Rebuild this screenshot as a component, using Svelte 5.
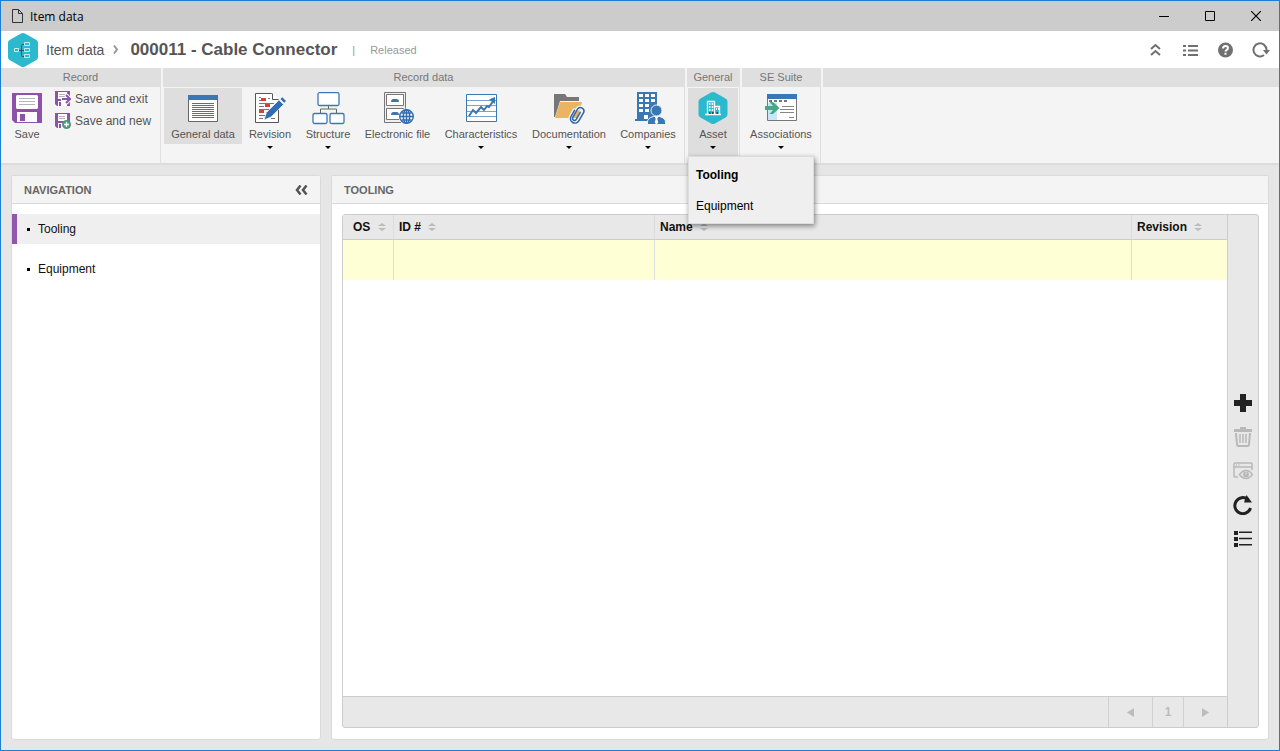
<script lang="ts">
  type RibbonItem = {
    label: string;
    icon: string;
    width: number;
    active?: boolean;
    dropdown?: boolean;
  };

  const recordItems: RibbonItem[] = [
    { label: "General data", icon: "general", width: 78, active: true },
    { label: "Revision", icon: "revision", width: 56, dropdown: true },
    { label: "Structure", icon: "structure", width: 60, dropdown: true },
    { label: "Electronic file", icon: "file", width: 79 },
    { label: "Characteristics", icon: "chart", width: 88, dropdown: true },
    { label: "Documentation", icon: "folder", width: 88, dropdown: true },
    { label: "Companies", icon: "companies", width: 70, dropdown: true },
  ];

  const sections = ["Tooling", "Equipment"];
  const columns = [
    { key: "os", label: "OS" },
    { key: "id", label: "ID #" },
    { key: "name", label: "Name" },
    { key: "revision", label: "Revision" },
  ];

  let selected = $state("Tooling");
  let menuOpen = $state(true);

  function select(section: string) {
    selected = section;
    menuOpen = false;
  }
</script>

{#snippet floppy()}
  <path fill="#8e52ab" d="M0 0h30v30H3l-3-3z" />
  <path fill="#fff" d="M5 2h20l1 1v12l-1 1H5l-1-1V3z" />
  <path fill="none" stroke="#b5b5b5" d="M7 5.500h16M7 8.500h16M7 11.500h16" />
  <path fill="#fff" d="M5 19h20v10H5z" />
  <path fill="#8e52ab" d="M8 21h5v7H8z" />
{/snippet}

{#snippet smallFloppy()}
  <path fill="#8e52ab" d="M0 0h15v15H2l-2-2z" />
  <path fill="#fff" d="M3 1h9v7H3zM3 10h9v5H3z" />
  <path fill="none" stroke="#b5b5b5" d="M4 3.500h6M4 5.500h6" />
  <path fill="#8e52ab" d="M4 11h2v4H4z" />
{/snippet}

{#snippet ribbonIcon(name: string)}
  <svg class="ribbon-icon" viewBox="0 0 32 32" aria-hidden="true">
    {#if name === "general"}
      <path fill="#fff" stroke="#666" d="M1.500 3.500h29v26h-29z" />
      <path fill="#3b77b5" d="M1 3h30v5H1z" />
      <path
        fill="none"
        stroke="#3b77b5"
        d="M5 11.500h22M5 13.500h22M5 15.500h22M5 17.500h22M5 19.500h22M5 21.500h22M5 23.500h22M5 25.500h22"
      />
    {:else if name === "revision"}
      <path fill="#fff" stroke="#555" d="M1.500 1.500h16l7 7v22h-23z" />
      <path fill="#fff" stroke="#555" d="M18.500 1.500v6h6" />
      <path
        fill="none"
        stroke="#777"
        d="M5 5.500h2M5 8.500h2M14 6.500h2M5 11.500h15M5 14.500h5M5 17.500h13M12 20.500h4M5 23.500h9M5 26.500h4M17 26.500h4"
      />
      <path fill="#cc4433" d="M7 6h5v3H7zM11 12h5v3h-5zM5 18h5v3H5z" />
      <path
        fill="#2f6db5"
        stroke="#f4f4f4"
        stroke-width=".7"
        d="M10 28l2.500-7.500L25 8l4.500 4.500L17 25z"
      />
      <path fill="#2f6db5" d="M26.500 7l1.800-1.800 3.700 3.700-1.800 1.800z" />
    {:else if name === "structure"}
      <path fill="none" stroke="#666" d="M16.500 14v3M8.500 21v-4h16v4" />
      <g fill="#fff" stroke="#3b77b5" stroke-width="1.300">
        <rect x="6" y=".7" width="21" height="12.800" rx="1.500" />
        <rect x="1" y="21.500" width="14" height="10" rx="1.500" />
        <rect x="18" y="21.500" width="14" height="10" rx="1.500" />
      </g>
    {:else if name === "file"}
      <path fill="#eee" stroke="#777" d="M2.500.500h21v30h-21z" />
      <path
        fill="#fff"
        stroke="#777"
        d="M4.500 2.500h17v11h-17zM4.500 16.500h17v11h-17z"
      />
      <path
        fill="#3b77b5"
        d="M9 10q0-3 2.500-3h3Q17 7 17 10zM9 23q0-3 2.500-3h3q2.500 0 2.500 3z"
      />
      <circle cx="24.500" cy="24.500" r="8" fill="#f4f4f4" />
      <g fill="none" stroke="#2f6db5" stroke-width="1.400">
        <circle cx="24.500" cy="24.500" r="6.800" />
        <ellipse cx="24.500" cy="24.500" rx="3.200" ry="6.800" />
        <path d="M24.500 18v13M18 24.500h13M19.500 21h10M19.500 28h10" />
      </g>
    {:else if name === "chart"}
      <path fill="#fff" stroke="#3b77b5" d="M1.500 2.500h30v27h-30z" />
      <path
        fill="none"
        stroke="#78a3d0"
        d="M2 8.500h29M2 13.500h29M2 19.500h29M2 24.500h29"
      />
      <path
        fill="none"
        stroke="#3b77b5"
        stroke-width="2"
        d="M4 24l4-6 3 3 5-6 3 3 3-4 2 1 5-7"
      />
      <path fill="#3b77b5" d="M24 7.500l6-2.500v7z" />
    {:else if name === "folder"}
      <path fill="#777" d="M1 2h11l2 3h12v4H7L2 25H1z" />
      <path fill="#e9b565" d="M7 10h22l-4 16H2z" />
      <g
        fill="none"
        stroke-linecap="round"
        transform="translate(24 22) rotate(30)"
      >
        <path
          stroke="#f5f5f5"
          stroke-width="4"
          d="M-4-2V5a4.300 4.300 0 0 0 9 0V-5a3.600 3.600 0 0 0-7 0"
        />
        <path
          stroke="#2d63a8"
          stroke-width="1.500"
          d="M-4-2V5a4.300 4.300 0 0 0 9 0V-5a3.600 3.600 0 0 0-7 0V5a2 2 0 0 0 4 0V-3"
        />
      </g>
    {:else if name === "companies"}
      <path fill="#3b77b5" d="M5 0h20v29H3v-2h2z" />
      <path
        fill="#fff"
        d="M7 2h4v3H7zM13 2h4v3h-4zM19 2h4v3h-4zM7 7h4v3H7zM13 7h4v3h-4zM19 7h4v3h-4zM7 12h4v3H7zM13 12h4v3h-4zM7 17h4v3H7zM13 17h4v3h-4zM12 23h4v4h-4z"
      />
      <g fill="#3b77b5" stroke="#f5f5f5">
        <path d="M15.500 32.500V30q0-4 6-5.500h6q6 1.500 6 5.500v2.500z" />
        <circle cx="24.500" cy="18.500" r="5.500" />
      </g>
      <path fill="#fff" d="M23 25h3l-.7 2 1 3.500-1.800 2-1.800-2 1-3.500z" />
    {:else if name === "asset"}
      <path
        fill="#2cb9ce"
        d="M14 .6q2-1.200 4 0l10.500 6q2 1 2 3v12.800q0 2-2 3L18 31.400q-2 1.200-4 0l-10.500-6q-2-1-2-3V9.600q0-2 2-3z"
      />
      <path
        fill="none"
        stroke="#fff"
        stroke-width="1.300"
        d="M8 22.500h16M10.500 22V9.500h7V22M17.500 14.500h5V22"
      />
      <path
        fill="#fff"
        d="M12 11h1.500v2H12zM14.700 11h1.500v2h-1.500zM12 14h1.500v2H12zM14.700 14h1.500v2h-1.500zM12 17h1.500v2H12zM14.700 17h1.500v2h-1.500zM19 16h1v2h-1zM21 16h1v2h-1z"
      />
      <path fill="#164e59" d="M12 20h1.500v2H12zM15 20h1.500v2H15zM19.500 20H21v2h-1.500z" />
    {:else if name === "associations"}
      <path fill="#fff" stroke="#777" d="M2.500 2.500h29v26h-29z" />
      <path fill="#3b77b5" d="M2 2h30v5H2z" />
      <path fill="#c9e5fa" d="M3 11h9v17H3z" />
      <path
        fill="none"
        stroke="#777"
        stroke-width="2"
        stroke-dasharray="3 2"
        d="M4 9h18"
      />
      <path
        fill="none"
        stroke="#888"
        d="M17 14.500h12M15 17.500h14M15 20.500h14M24 25.500h5"
      />
      <path fill="#45a985" d="M0 14h8l-3.500-4H8l6.500 6L8 22H4.500L8 18H0z" />
    {/if}
  </svg>
{/snippet}

{#snippet ribbonButton(item: RibbonItem)}
  <button
    class="ribbon-button"
    class:ribbon-button--active={item.active}
    style="width: {item.width}px"
    type="button"
  >
    {@render ribbonIcon(item.icon)}
    <span>{item.label}</span>
    {#if item.dropdown}<i class="caret"></i>{/if}
  </button>
{/snippet}

<div class="window">
  <div class="titlebar">
    <svg width="12" height="14" viewBox="0 0 12 14" aria-hidden="true">
      <path fill="none" stroke="#333" d="M.5.500h6l4 4v9H.5zM6.500.500v4h4" />
    </svg>
    <span class="titlebar__text">Item data</span>
    <button type="button" aria-label="Minimize">
      <svg width="10" height="10"><path stroke="#000" d="M0 5.500h10" /></svg>
    </button>
    <button type="button" aria-label="Maximize">
      <svg width="10" height="10">
        <path fill="none" stroke="#000" d="M.5.500h9v9H.5z" />
      </svg>
    </button>
    <button type="button" aria-label="Close">
      <svg width="10" height="10">
        <path stroke="#000" stroke-width="1.200" d="M0 0l10 10M10 0L0 10" />
      </svg>
    </button>
  </div>

  <header class="header">
    <svg class="logo" viewBox="0 0 30 34" aria-hidden="true">
      <path
        fill="#2cb9ce"
        d="M13 .6q2-1.200 4 0l11 6.200q2 1 2 3v14.400q0 2-2 3l-11 6.200q-2 1.200-4 0l-11-6.200q-2-1-2-3V9.800q0-2 2-3z"
      />
      <path
        fill="none"
        stroke="#c6eff5"
        d="M6.500 15.500h4v3h-4zM16.500 9.500h5v3h-5zM16.500 15.500h5v3h-5zM16.500 21.500h5v3h-5z"
      />
      <path
        fill="none"
        stroke="#1f5b66"
        d="M11 17.500h5M16 11.500h-1.500q-1 0-1 1v10q0 1 1 1H16"
      />
    </svg>
    <span class="header__crumb">Item data</span>
    <svg class="header__chevron" width="6" height="9" aria-hidden="true">
      <path
        fill="none"
        stroke="#999"
        stroke-width="2"
        d="M1 .500l3 4-3 4"
      />
    </svg>
    <h1>000011 - Cable Connector</h1>
    <span class="header__divider">|</span>
    <span class="header__status">Released</span>
    <div class="header__tools">
      <button type="button" aria-label="Collapse">
        <svg width="16" height="16">
          <path
            fill="none"
            stroke="#707070"
            stroke-width="2"
            d="M4 7l4.500-4L13 7M4 13l4.500-4 4.500 4"
          />
        </svg>
      </button>
      <button type="button" aria-label="Options">
        <svg width="16" height="16">
          <path
            fill="none"
            stroke="#707070"
            stroke-width="2"
            d="M1 4h3M6 4h10M1 8.500h3M6 8.500h10M1 13h3M6 13h10"
          />
        </svg>
      </button>
      <button type="button" aria-label="Help">
        <svg width="16" height="16">
          <circle cx="8.500" cy="8" r="7.500" fill="#707070" />
          <path
            fill="none"
            stroke="#fff"
            stroke-width="2"
            d="M6 6.500Q6 4 8.500 4T11 6q0 1.200-1.200 1.800T8.500 9.500M8.500 10.700v2"
          />
        </svg>
      </button>
      <button type="button" aria-label="Reload">
        <svg width="18" height="16">
          <path
            fill="none"
            stroke="#707070"
            stroke-width="2"
            d="M12 13A6.500 6.500 0 1 1 14.500 8v1"
          />
          <path fill="#707070" d="M11 8h7l-3.500 4.500z" />
        </svg>
      </button>
    </div>
  </header>

  <div class="ribbon">
    <section class="group group--record">
      <h2>Record</h2>
      <div class="group__body">
        <button class="ribbon-button ribbon-button--single" type="button">
          <svg class="ribbon-icon" viewBox="-1 -1 32 32" aria-hidden="true">
            {@render floppy()}
          </svg>
          <span>Save</span>
        </button>
        <div class="save-options">
          <button type="button">
            <svg width="16" height="16" aria-hidden="true">
              {@render smallFloppy()}
              <path
                fill="none"
                stroke="#fff"
                stroke-width="4"
                d="M6 8h9M11 4l4 4-4 4"
              />
              <path
                fill="none"
                stroke="#8e52ab"
                stroke-width="2"
                d="M7 8h8M11 4l4 4-4 4"
              />
            </svg>
            Save and exit
          </button>
          <button type="button">
            <svg width="16" height="16" aria-hidden="true">
              {@render smallFloppy()}
              <circle cx="11.500" cy="11.500" r="4.500" fill="#45a07a" />
              <path stroke="#fff" stroke-width="1.300" d="M9 11.500h5M11.500 9v5" />
            </svg>
            Save and new
          </button>
        </div>
      </div>
    </section>

    <section class="group">
      <h2>Record data</h2>
      <div class="group__body">
        {#each recordItems as item (item.label)}
          {@render ribbonButton(item)}
        {/each}
      </div>
    </section>

    <section class="group">
      <h2>General</h2>
      <div class="group__body">
        <button
          class="ribbon-button ribbon-button--single"
          class:ribbon-button--active={menuOpen}
          type="button"
          aria-haspopup="menu"
          aria-expanded={menuOpen}
          onclick={() => (menuOpen = !menuOpen)}
        >
          {@render ribbonIcon("asset")}
          <span>Asset</span>
          <i class="caret"></i>
        </button>
        {#if menuOpen}
          <div class="menu" role="menu">
            {#each sections as section (section)}
              <button
                class:menu__current={section === selected}
                type="button"
                role="menuitem"
                onclick={() => select(section)}
              >
                {section}
              </button>
            {/each}
          </div>
        {/if}
      </div>
    </section>

    <section class="group">
      <h2>SE Suite</h2>
      <div class="group__body">
        {@render ribbonButton({
          label: "Associations",
          icon: "associations",
          width: 76,
          dropdown: true,
        })}
      </div>
    </section>

    <div class="group group--rest"><div class="group__blank"></div></div>
  </div>

  <main class="content">
    <aside class="panel panel--nav">
      <div class="panel__head">
        <h2>NAVIGATION</h2>
        <button type="button" aria-label="Hide navigation">
          <svg width="13" height="10">
            <path
              fill="none"
              stroke="#555"
              stroke-width="2.500"
              d="M5.500.500L2 5l3.500 4.500M11.500.500L8 5l3.500 4.500"
            />
          </svg>
        </button>
      </div>
      <nav>
        {#each sections as section (section)}
          <a
            href="#{section.toLowerCase()}"
            class:selected={section === selected}
            onclick={() => select(section)}
          >
            {section}
          </a>
        {/each}
      </nav>
    </aside>

    <section class="panel panel--main">
      <div class="panel__head"><h2>TOOLING</h2></div>
      <div class="grid">
        <div class="grid__main">
          <div class="grid__scroll">
            <table>
              <thead>
                <tr>
                  {#each columns as column (column.key)}
                    <th class="col-{column.key}">
                      {column.label}
                      <svg width="8" height="8" aria-hidden="true">
                        <path fill="#bcbcbc" d="M0 3l4-3 4 3zM0 5h8L4 8z" />
                      </svg>
                    </th>
                  {/each}
                </tr>
              </thead>
              <tbody>
                <tr>
                  {#each columns as column (column.key)}
                    <td></td>
                  {/each}
                </tr>
              </tbody>
            </table>
          </div>
          <div class="pager">
            <button type="button" aria-label="Previous page">
              <svg width="7" height="9"><path fill="#bcbcbc" d="M7 0v9L0 4.500z" /></svg>
            </button>
            <span>1</span>
            <button type="button" aria-label="Next page">
              <svg width="7" height="9"><path fill="#bcbcbc" d="M0 0v9l7-4.500z" /></svg>
            </button>
          </div>
        </div>
        <div class="toolbar">
          <button type="button" aria-label="Add">
            <svg width="20" height="20">
              <path fill="#222" d="M7 1h6v6h6v6h-6v6H7v-6H1V7h6z" />
            </svg>
          </button>
          <button type="button" aria-label="Delete" disabled>
            <svg width="20" height="20">
              <path fill="#b8b8b8" d="M7 0h6v2h6v3H1V2h6z" />
              <path
                fill="none"
                stroke="#b8b8b8"
                stroke-width="2"
                d="M3 6l1 11.500q.2 1.500 1.500 1.500h9q1.300 0 1.500-1.500L17 6"
              />
              <path
                fill="none"
                stroke="#b8b8b8"
                stroke-width="1.500"
                d="M7 7v9M10 7v9M13 7v9"
              />
            </svg>
          </button>
          <button type="button" aria-label="View" disabled>
            <svg width="20" height="20">
              <path
                fill="none"
                stroke="#b8b8b8"
                stroke-width="1.500"
                d="M5 16H2q-1 0-1-1V3q0-1 1-1h16q1 0 1 1v6M1 6h18M3 4h1M5.500 4h1"
              />
              <path
                fill="#e8e8e8"
                stroke="#b8b8b8"
                stroke-width="1.500"
                d="M6.500 13.500q3-4 6.500-4t6.500 4q-3 4-6.500 4t-6.500-4z"
              />
              <circle cx="13" cy="13.500" r="3" fill="#b8b8b8" />
              <path stroke="#e8e8e8" d="M13 11.500v2" />
            </svg>
          </button>
          <button type="button" aria-label="Refresh">
            <svg width="20" height="20">
              <path
                fill="none"
                stroke="#222"
                stroke-width="3"
                d="M15 4.500A8 8 0 1 0 17.500 13"
              />
              <path fill="#222" d="M13.500 0L19 7.500h-8z" />
            </svg>
          </button>
          <button type="button" aria-label="List">
            <svg width="20" height="20">
              <path fill="#222" d="M1 2h4v4H1zM1 8h4v4H1zM1 14h4v4H1z" />
              <path stroke="#222" stroke-width="1.500" d="M6 3.200h13M6 9.500h13M6 15.700h13" />
            </svg>
          </button>
        </div>
      </div>
    </section>
  </main>
</div>

<style>
  :global(body) {
    margin: 0;
  }

  .window {
    box-sizing: border-box;
    display: flex;
    flex-direction: column;
    min-height: 100vh;
    border: 1px solid #1b80d3;
    background: #e6e6e6;
    color: #111;
    font-family: "Liberation Sans", Arial, sans-serif;
    font-size: 12px;
  }

  h1,
  h2 {
    margin: 0;
  }

  button {
    margin: 0;
    padding: 0;
    border: 0;
    background: none;
    color: inherit;
    font: inherit;
    cursor: pointer;
  }

  svg {
    flex: none;
    display: block;
  }

  .titlebar {
    display: flex;
    align-items: center;
    height: 30px;
    padding-left: 11px;
    background: #ccc;
    color: #000;
    font-family: "Open Sans", "Noto Sans", sans-serif;
  }

  .titlebar__text {
    flex: 1;
    margin-left: 6px;
  }

  .titlebar button {
    display: grid;
    place-items: center;
    width: 46px;
    height: 30px;
  }

  .header {
    display: flex;
    align-items: center;
    height: 37px;
    padding: 0 11px 0 7px;
    background: #fff;
  }

  .logo {
    width: 30px;
    height: 34px;
  }

  .header__crumb {
    margin-left: 8px;
    color: #555;
    font-size: 14px;
  }

  .header__chevron {
    margin: 0 11px 0 9px;
  }

  h1 {
    color: #555;
    font-size: 17px;
    line-height: 20px;
  }

  .header__divider,
  .header__status {
    margin-left: 15px;
    color: #999;
    font-size: 11px;
  }

  .header__tools {
    display: flex;
    gap: 19px;
    margin-left: auto;
  }

  .header__tools button {
    width: 16px;
    height: 16px;
  }

  .ribbon {
    display: flex;
    gap: 2px;
    height: 95px;
    border-bottom: 2px solid #dcdcdc;
    background: #f4f4f4;
  }

  .group {
    display: flex;
    flex-direction: column;
    border-right: 1px solid #e0e0e0;
  }

  .group--record {
    width: 159px;
  }

  .group--rest {
    flex: 1;
    border-right: 0;
  }

  .group h2,
  .group__blank {
    height: 19px;
    background: #dfdfdf;
    color: #777;
    font-size: 11px;
    font-weight: normal;
    line-height: 19px;
    text-align: center;
  }

  .group__body {
    position: relative;
    display: flex;
    align-items: flex-start;
    padding: 1px 1px 0;
  }

  .ribbon-button {
    display: flex;
    flex-direction: column;
    align-items: center;
    padding: 4px 0 2px;
    color: #555;
    font-size: 11px;
    line-height: 16px;
    white-space: nowrap;
  }

  .ribbon-button--single {
    width: 50px;
    padding-bottom: 8px;
  }

  .ribbon-button--active {
    background: #dedede;
  }

  .ribbon-icon {
    width: 32px;
    height: 32px;
    margin-bottom: 2px;
    overflow: visible;
  }

  .caret {
    margin-top: 4px;
    border: 3px solid transparent;
    border-top-color: #000;
    border-bottom: 0;
  }

  .save-options {
    display: flex;
    flex-direction: column;
    margin-left: 3px;
  }

  .save-options button {
    display: flex;
    align-items: center;
    gap: 4px;
    height: 22px;
    color: #555;
  }

  .menu {
    position: absolute;
    top: 69px;
    left: 1px;
    z-index: 1;
    display: flex;
    flex-direction: column;
    width: 124px;
    padding: 2px 0;
    border: 1px solid #ddd;
    background: #efefef;
    box-shadow: 1px 2px 5px rgb(0 0 0 / 45%);
  }

  .menu button {
    height: 31px;
    padding: 0 7px;
    color: #000;
    text-align: left;
  }

  .menu .menu__current {
    font-weight: bold;
  }

  .content {
    flex: 1;
    display: flex;
    gap: 10px;
    padding: 10px;
  }

  .panel {
    display: flex;
    flex-direction: column;
    border: 1px solid #dadada;
    border-radius: 3px;
    background: #fff;
  }

  .panel--nav {
    flex: none;
    width: 308px;
  }

  .panel--main {
    flex: 1;
  }

  .panel__head {
    display: flex;
    align-items: center;
    justify-content: space-between;
    height: 27px;
    padding: 0 12px;
    border-bottom: 1px solid #dadada;
    background: #f4f4f4;
  }

  .panel__head h2 {
    color: #666;
    font-size: 11px;
  }

  nav {
    display: flex;
    flex-direction: column;
    gap: 10px;
    padding-top: 10px;
  }

  nav a {
    display: flex;
    align-items: center;
    gap: 8px;
    height: 30px;
    padding-left: 10px;
    border-left: 5px solid transparent;
    color: #111;
    text-decoration: none;
  }

  nav a::before {
    width: 3px;
    height: 3px;
    background: #000;
    content: "";
  }

  nav .selected {
    border-left-color: #9257ac;
    background: #efefef;
  }

  .grid {
    flex: 1;
    display: flex;
    margin: 10px 9px 11px 10px;
    border: 1px solid #ccc;
    border-radius: 3px;
    background: #e8e8e8;
  }

  .grid__main {
    flex: 1;
    display: flex;
    flex-direction: column;
    border-right: 1px solid #ccc;
  }

  .grid__scroll {
    flex: 1;
    background: #fff;
  }

  table {
    width: 100%;
    border-collapse: separate;
    border-spacing: 0;
    table-layout: fixed;
  }

  th {
    box-sizing: border-box;
    height: 25px;
    padding: 0 5px;
    border-bottom: 1px solid #ccc;
    background: #e8e8e8;
    color: #111;
    text-align: left;
  }

  th svg {
    display: inline-block;
    margin-left: 4px;
  }

  th + th,
  td + td {
    border-left: 1px solid #dcdcdc;
  }

  .col-os {
    width: 50px;
    padding: 0 0 0 10px;
  }

  .col-id {
    width: 261px;
  }

  .col-revision {
    width: 96px;
  }

  td {
    height: 40px;
    padding: 0;
    background: #ffffd6;
  }

  .pager {
    display: flex;
    justify-content: flex-end;
    height: 30px;
    border-top: 1px solid #ccc;
  }

  .pager button,
  .pager span {
    display: grid;
    place-items: center;
    width: 44px;
    border-left: 1px solid #d0d0d0;
  }

  .pager span {
    width: 30px;
    color: #bcbcbc;
    font-weight: bold;
  }

  .toolbar {
    display: flex;
    flex-direction: column;
    align-items: center;
    justify-content: center;
    gap: 14px;
    width: 30px;
  }

  .toolbar button {
    width: 20px;
    height: 20px;
  }
</style>
